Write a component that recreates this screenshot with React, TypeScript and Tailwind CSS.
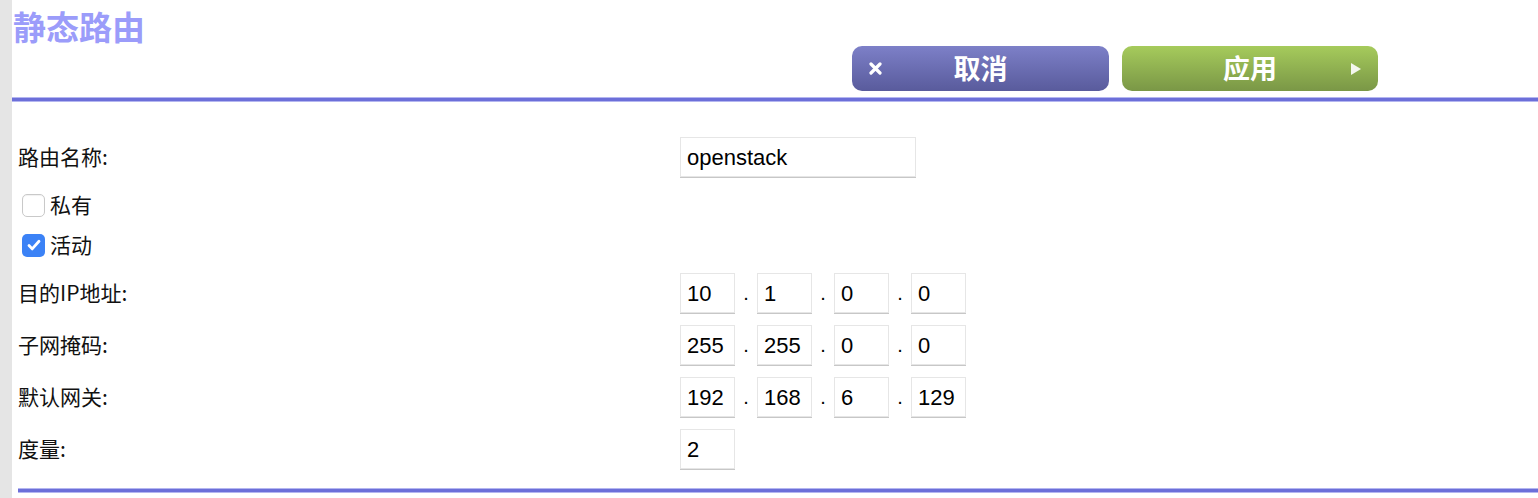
const cjk = "font-['Noto_Sans_CJK_SC','Noto_Sans',sans-serif]";
const latin = "font-['Liberation_Sans','Noto_Sans_CJK_SC',sans-serif]";

function Rule({ className = "" }: { className?: string }) {
  return (
    <div className={`border-y border-[#b4b6f0] bg-[#6c6fd9] h-[5px] ${className}`} />
  );
}

function TextBox({ value, width }: { value: string; width: string }) {
  return (
    <div
      className={`${width} h-[40px] flex items-center px-[6px] bg-white border border-[#e6e6e6] shadow-[0_1px_0_#c7c7c7] text-[22px] text-black ${latin}`}
    >
      {value}
    </div>
  );
}

function IpRow({ label, parts }: { label: string; parts: string[] }) {
  return (
    <div className="flex items-center h-[40px] mb-[12px]">
      <div className="w-[662px] text-[21px] text-[#111]">{label}</div>
      <div className="flex items-center">
        {parts.map((p, i) => (
          <div key={i} className="flex items-center">
            {i > 0 && (
              <span className={`w-[22px] text-center text-[20px] ${latin}`}>.</span>
            )}
            <TextBox value={p} width="w-[55px]" />
          </div>
        ))}
      </div>
    </div>
  );
}

function Check({ label, checked }: { label: string; checked?: boolean }) {
  return (
    <div className="flex items-center h-[40px] pl-[4px]">
      {checked ? (
        <span className="w-[23px] h-[23px] rounded-[5px] bg-[#3b82f6] flex items-center justify-center">
          <svg width="16" height="16" viewBox="0 0 16 16">
            <path d="M3 8.5l3.2 3.4L13 4.3" fill="none" stroke="white" strokeWidth="2.8" strokeLinecap="round" strokeLinejoin="round" />
          </svg>
        </span>
      ) : (
        <span className="w-[23px] h-[23px] rounded-[5px] bg-white border border-[#c9c9c9] shadow-[inset_0_1px_1px_rgba(0,0,0,0.06)]" />
      )}
      <span className="ml-[5px] text-[21px] text-[#111]">{label}</span>
    </div>
  );
}

export default function App() {
  return (
    <div className={`flex w-[1538px] h-[498px] bg-white overflow-hidden ${cjk}`}>
      {/* left gray strip */}
      <div className="w-[12px] shrink-0 bg-[#e5e5e5]" />

      <div className="flex-1 flex flex-col">
        {/* Header */}
        <header>
          <h1 className="pt-[6px] pl-[1px] text-[33px] leading-[40px] font-bold text-[#9b9cfa]">
            静态路由
          </h1>
          <div className="flex gap-[13px] pl-[840px]">
            <button className="relative w-[257px] h-[45px] rounded-[10px] bg-gradient-to-b from-[#7d80c8] to-[#595b9c] text-white text-[27px] font-bold flex items-center justify-center">
              <svg className="absolute left-[17px] top-[16px]" width="13" height="13" viewBox="0 0 13 13">
                <path d="M2 2l9 9M11 2l-9 9" stroke="white" strokeWidth="3.2" strokeLinecap="round" />
              </svg>
              取消
            </button>
            <button className="relative w-[256px] h-[45px] rounded-[10px] bg-gradient-to-b from-[#a6cb5c] to-[#7a9746] text-white text-[27px] font-bold flex items-center justify-center">
              应用
              <svg className="absolute right-[16px] top-[16px]" width="12" height="14" viewBox="0 0 12 14">
                <path d="M1 1l10 6-10 6z" fill="#f4f7ee" />
              </svg>
            </button>
          </div>
          <Rule className="mt-[6px]" />
        </header>

        {/* Form */}
        <section className="pl-[6px] pt-[35px] flex flex-col">
          <div className="flex items-center h-[40px] mb-[8px]">
            <div className="w-[662px] text-[21px] text-[#111]">路由名称:</div>
            <TextBox value="openstack" width="w-[236px]" />
          </div>
          <Check label="私有" />
          <Check label="活动" checked />
          <div className="h-[8px]" />
          <IpRow label="目的IP地址:" parts={["10", "1", "0", "0"]} />
          <IpRow label="子网掩码:" parts={["255", "255", "0", "0"]} />
          <IpRow label="默认网关:" parts={["192", "168", "6", "129"]} />
          <div className="flex items-center h-[40px]">
            <div className="w-[662px] text-[21px] text-[#111]">度量:</div>
            <TextBox value="2" width="w-[55px]" />
          </div>
          <Rule className="mt-[19px]" />
        </section>
      </div>
    </div>
  );
}
